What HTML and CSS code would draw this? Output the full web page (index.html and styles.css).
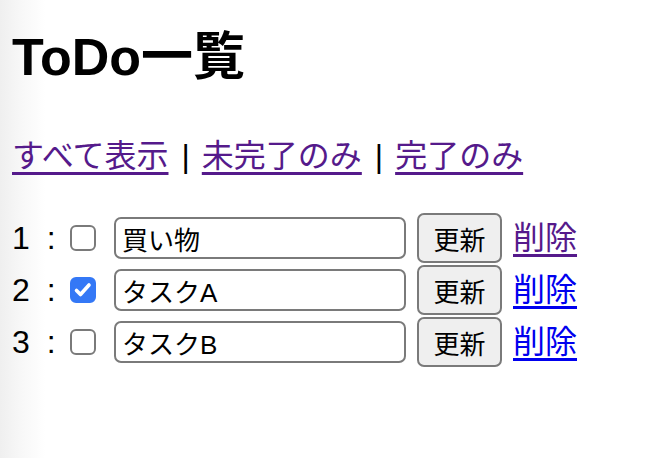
FILE: index.html
```html
<!DOCTYPE html>
<html lang="ja">
<head>
<meta charset="utf-8">
<title>ToDo一覧</title>
<link rel="stylesheet" href="styles.css">
</head>
<body>
<h1 class="title">ToDo一覧</h1>
<nav class="filters">
  <a href="#" class="link visited">すべて表示</a><span class="sep">|</span><a href="#" class="link visited">未完了のみ</a><span class="sep">|</span><a href="#" class="link visited">完了のみ</a>
</nav>
<div class="list">
  <div class="row">
    <span class="num">1 :</span>
    <input type="checkbox" class="check">
    <input type="text" class="field" value="買い物">
    <button class="btn">更新</button>
    <a href="#" class="link visited">削除</a>
  </div>
  <div class="row">
    <span class="num">2 :</span>
    <input type="checkbox" class="check" checked>
    <input type="text" class="field" value="タスクA">
    <button class="btn">更新</button>
    <a href="#" class="link">削除</a>
  </div>
  <div class="row">
    <span class="num">3 :</span>
    <input type="checkbox" class="check">
    <input type="text" class="field" value="タスクB">
    <button class="btn">更新</button>
    <a href="#" class="link">削除</a>
  </div>
</div>
</body>
</html>
```
FILE: styles.css
```css
html, body {
  margin: 0;
  height: 100%;
}
body {
  padding-left: 12px;
  box-sizing: border-box;
  background: linear-gradient(to right, #efefef 0px, #f7f7f7 20px, #ffffff 45px);
  font-family: "Liberation Sans", "Noto Sans CJK JP", sans-serif;
  font-size: 32px;
  color: #000;
}
.title {
  margin: 0;
  padding-top: 28px;
  font-size: 52px;
  line-height: 58px;
  font-weight: bold;
}
.filters {
  margin-top: 50px;
  line-height: 40px;
}
.sep {
  margin: 0 12px 0 13px;
}
.link {
  color: #0000ee;
  text-decoration: underline;
  text-decoration-thickness: 3px;
  text-underline-offset: 5px;
}
.link.visited {
  color: #551a8b;
}
.list {
  margin-top: 36px;
}
.row {
  display: flex;
  align-items: center;
  height: 52px;
}
.num {
  width: 58px;
  line-height: 40px;
  word-spacing: 8px;
}
.check {
  appearance: none;
  -webkit-appearance: none;
  width: 26px;
  height: 26px;
  margin: 0 18px 0 0;
  box-sizing: border-box;
  border: 2px solid #7a7a7a;
  border-radius: 6px;
  background: #fff;
}
.check:checked {
  border-color: #3478f6;
  background: #3478f6 url("data:image/svg+xml;utf8,<svg xmlns='http://www.w3.org/2000/svg' viewBox='0 0 26 26'><path d='M6.5 13.5 L10.5 17.5 L19 8' fill='none' stroke='white' stroke-width='3.6' stroke-linecap='round' stroke-linejoin='round'/></svg>") center / 26px 26px no-repeat;
}
.field {
  width: 292px;
  height: 42px;
  box-sizing: border-box;
  margin: 0 11px 0 0;
  padding: 0 6px;
  border: 2px solid #7a7a7a;
  border-radius: 7px;
  font-family: "Liberation Sans", "Noto Sans CJK JP", sans-serif;
  font-size: 26px;
  color: #000;
  background: #fff;
}
.btn {
  width: 85px;
  height: 50px;
  box-sizing: border-box;
  margin: 0 11px 0 0;
  padding: 0;
  border: 2px solid #7a7a7a;
  border-radius: 7px;
  background: #efefef;
  font-family: "Liberation Sans", "Noto Sans CJK JP", sans-serif;
  font-size: 26px;
  color: #000;
}
.row .link {
  line-height: 40px;
}
```
